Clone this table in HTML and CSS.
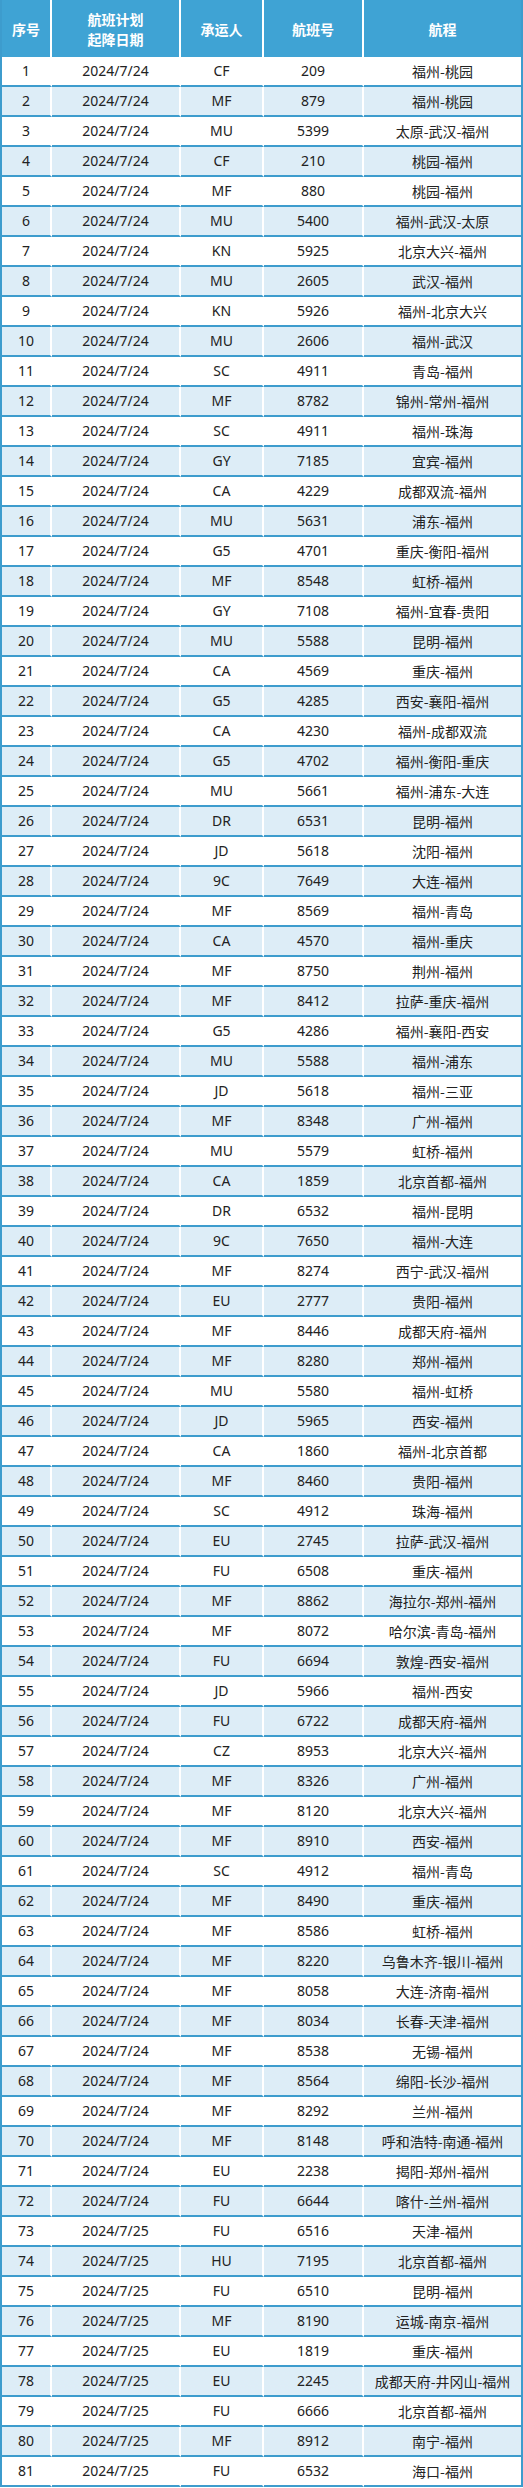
FILE: index.html
```html
<!DOCTYPE html>
<html lang="zh-CN">
<head>
<meta charset="utf-8">
<title>航班计划</title>
<link rel="stylesheet" href="styles.css">
</head>
<body>
<table class="flights">
<colgroup>
<col class="c-no"><col class="c-date"><col class="c-carrier"><col class="c-flight"><col class="c-route">
</colgroup>
<thead>
<tr><th>序号</th><th>航班计划<br>起降日期</th><th>承运人</th><th>航班号</th><th>航程</th></tr>
</thead>
<tbody>
<tr><td>1</td><td>2024/7/24</td><td>CF</td><td>209</td><td>福州-桃园</td></tr>
<tr><td>2</td><td>2024/7/24</td><td>MF</td><td>879</td><td>福州-桃园</td></tr>
<tr><td>3</td><td>2024/7/24</td><td>MU</td><td>5399</td><td>太原-武汉-福州</td></tr>
<tr><td>4</td><td>2024/7/24</td><td>CF</td><td>210</td><td>桃园-福州</td></tr>
<tr><td>5</td><td>2024/7/24</td><td>MF</td><td>880</td><td>桃园-福州</td></tr>
<tr><td>6</td><td>2024/7/24</td><td>MU</td><td>5400</td><td>福州-武汉-太原</td></tr>
<tr><td>7</td><td>2024/7/24</td><td>KN</td><td>5925</td><td>北京大兴-福州</td></tr>
<tr><td>8</td><td>2024/7/24</td><td>MU</td><td>2605</td><td>武汉-福州</td></tr>
<tr><td>9</td><td>2024/7/24</td><td>KN</td><td>5926</td><td>福州-北京大兴</td></tr>
<tr><td>10</td><td>2024/7/24</td><td>MU</td><td>2606</td><td>福州-武汉</td></tr>
<tr><td>11</td><td>2024/7/24</td><td>SC</td><td>4911</td><td>青岛-福州</td></tr>
<tr><td>12</td><td>2024/7/24</td><td>MF</td><td>8782</td><td>锦州-常州-福州</td></tr>
<tr><td>13</td><td>2024/7/24</td><td>SC</td><td>4911</td><td>福州-珠海</td></tr>
<tr><td>14</td><td>2024/7/24</td><td>GY</td><td>7185</td><td>宜宾-福州</td></tr>
<tr><td>15</td><td>2024/7/24</td><td>CA</td><td>4229</td><td>成都双流-福州</td></tr>
<tr><td>16</td><td>2024/7/24</td><td>MU</td><td>5631</td><td>浦东-福州</td></tr>
<tr><td>17</td><td>2024/7/24</td><td>G5</td><td>4701</td><td>重庆-衡阳-福州</td></tr>
<tr><td>18</td><td>2024/7/24</td><td>MF</td><td>8548</td><td>虹桥-福州</td></tr>
<tr><td>19</td><td>2024/7/24</td><td>GY</td><td>7108</td><td>福州-宜春-贵阳</td></tr>
<tr><td>20</td><td>2024/7/24</td><td>MU</td><td>5588</td><td>昆明-福州</td></tr>
<tr><td>21</td><td>2024/7/24</td><td>CA</td><td>4569</td><td>重庆-福州</td></tr>
<tr><td>22</td><td>2024/7/24</td><td>G5</td><td>4285</td><td>西安-襄阳-福州</td></tr>
<tr><td>23</td><td>2024/7/24</td><td>CA</td><td>4230</td><td>福州-成都双流</td></tr>
<tr><td>24</td><td>2024/7/24</td><td>G5</td><td>4702</td><td>福州-衡阳-重庆</td></tr>
<tr><td>25</td><td>2024/7/24</td><td>MU</td><td>5661</td><td>福州-浦东-大连</td></tr>
<tr><td>26</td><td>2024/7/24</td><td>DR</td><td>6531</td><td>昆明-福州</td></tr>
<tr><td>27</td><td>2024/7/24</td><td>JD</td><td>5618</td><td>沈阳-福州</td></tr>
<tr><td>28</td><td>2024/7/24</td><td>9C</td><td>7649</td><td>大连-福州</td></tr>
<tr><td>29</td><td>2024/7/24</td><td>MF</td><td>8569</td><td>福州-青岛</td></tr>
<tr><td>30</td><td>2024/7/24</td><td>CA</td><td>4570</td><td>福州-重庆</td></tr>
<tr><td>31</td><td>2024/7/24</td><td>MF</td><td>8750</td><td>荆州-福州</td></tr>
<tr><td>32</td><td>2024/7/24</td><td>MF</td><td>8412</td><td>拉萨-重庆-福州</td></tr>
<tr><td>33</td><td>2024/7/24</td><td>G5</td><td>4286</td><td>福州-襄阳-西安</td></tr>
<tr><td>34</td><td>2024/7/24</td><td>MU</td><td>5588</td><td>福州-浦东</td></tr>
<tr><td>35</td><td>2024/7/24</td><td>JD</td><td>5618</td><td>福州-三亚</td></tr>
<tr><td>36</td><td>2024/7/24</td><td>MF</td><td>8348</td><td>广州-福州</td></tr>
<tr><td>37</td><td>2024/7/24</td><td>MU</td><td>5579</td><td>虹桥-福州</td></tr>
<tr><td>38</td><td>2024/7/24</td><td>CA</td><td>1859</td><td>北京首都-福州</td></tr>
<tr><td>39</td><td>2024/7/24</td><td>DR</td><td>6532</td><td>福州-昆明</td></tr>
<tr><td>40</td><td>2024/7/24</td><td>9C</td><td>7650</td><td>福州-大连</td></tr>
<tr><td>41</td><td>2024/7/24</td><td>MF</td><td>8274</td><td>西宁-武汉-福州</td></tr>
<tr><td>42</td><td>2024/7/24</td><td>EU</td><td>2777</td><td>贵阳-福州</td></tr>
<tr><td>43</td><td>2024/7/24</td><td>MF</td><td>8446</td><td>成都天府-福州</td></tr>
<tr><td>44</td><td>2024/7/24</td><td>MF</td><td>8280</td><td>郑州-福州</td></tr>
<tr><td>45</td><td>2024/7/24</td><td>MU</td><td>5580</td><td>福州-虹桥</td></tr>
<tr><td>46</td><td>2024/7/24</td><td>JD</td><td>5965</td><td>西安-福州</td></tr>
<tr><td>47</td><td>2024/7/24</td><td>CA</td><td>1860</td><td>福州-北京首都</td></tr>
<tr><td>48</td><td>2024/7/24</td><td>MF</td><td>8460</td><td>贵阳-福州</td></tr>
<tr><td>49</td><td>2024/7/24</td><td>SC</td><td>4912</td><td>珠海-福州</td></tr>
<tr><td>50</td><td>2024/7/24</td><td>EU</td><td>2745</td><td>拉萨-武汉-福州</td></tr>
<tr><td>51</td><td>2024/7/24</td><td>FU</td><td>6508</td><td>重庆-福州</td></tr>
<tr><td>52</td><td>2024/7/24</td><td>MF</td><td>8862</td><td>海拉尔-郑州-福州</td></tr>
<tr><td>53</td><td>2024/7/24</td><td>MF</td><td>8072</td><td>哈尔滨-青岛-福州</td></tr>
<tr><td>54</td><td>2024/7/24</td><td>FU</td><td>6694</td><td>敦煌-西安-福州</td></tr>
<tr><td>55</td><td>2024/7/24</td><td>JD</td><td>5966</td><td>福州-西安</td></tr>
<tr><td>56</td><td>2024/7/24</td><td>FU</td><td>6722</td><td>成都天府-福州</td></tr>
<tr><td>57</td><td>2024/7/24</td><td>CZ</td><td>8953</td><td>北京大兴-福州</td></tr>
<tr><td>58</td><td>2024/7/24</td><td>MF</td><td>8326</td><td>广州-福州</td></tr>
<tr><td>59</td><td>2024/7/24</td><td>MF</td><td>8120</td><td>北京大兴-福州</td></tr>
<tr><td>60</td><td>2024/7/24</td><td>MF</td><td>8910</td><td>西安-福州</td></tr>
<tr><td>61</td><td>2024/7/24</td><td>SC</td><td>4912</td><td>福州-青岛</td></tr>
<tr><td>62</td><td>2024/7/24</td><td>MF</td><td>8490</td><td>重庆-福州</td></tr>
<tr><td>63</td><td>2024/7/24</td><td>MF</td><td>8586</td><td>虹桥-福州</td></tr>
<tr><td>64</td><td>2024/7/24</td><td>MF</td><td>8220</td><td>乌鲁木齐-银川-福州</td></tr>
<tr><td>65</td><td>2024/7/24</td><td>MF</td><td>8058</td><td>大连-济南-福州</td></tr>
<tr><td>66</td><td>2024/7/24</td><td>MF</td><td>8034</td><td>长春-天津-福州</td></tr>
<tr><td>67</td><td>2024/7/24</td><td>MF</td><td>8538</td><td>无锡-福州</td></tr>
<tr><td>68</td><td>2024/7/24</td><td>MF</td><td>8564</td><td>绵阳-长沙-福州</td></tr>
<tr><td>69</td><td>2024/7/24</td><td>MF</td><td>8292</td><td>兰州-福州</td></tr>
<tr><td>70</td><td>2024/7/24</td><td>MF</td><td>8148</td><td>呼和浩特-南通-福州</td></tr>
<tr><td>71</td><td>2024/7/24</td><td>EU</td><td>2238</td><td>揭阳-郑州-福州</td></tr>
<tr><td>72</td><td>2024/7/24</td><td>FU</td><td>6644</td><td>喀什-兰州-福州</td></tr>
<tr><td>73</td><td>2024/7/25</td><td>FU</td><td>6516</td><td>天津-福州</td></tr>
<tr><td>74</td><td>2024/7/25</td><td>HU</td><td>7195</td><td>北京首都-福州</td></tr>
<tr><td>75</td><td>2024/7/25</td><td>FU</td><td>6510</td><td>昆明-福州</td></tr>
<tr><td>76</td><td>2024/7/25</td><td>MF</td><td>8190</td><td>运城-南京-福州</td></tr>
<tr><td>77</td><td>2024/7/25</td><td>EU</td><td>1819</td><td>重庆-福州</td></tr>
<tr><td>78</td><td>2024/7/25</td><td>EU</td><td>2245</td><td>成都天府-井冈山-福州</td></tr>
<tr><td>79</td><td>2024/7/25</td><td>FU</td><td>6666</td><td>北京首都-福州</td></tr>
<tr><td>80</td><td>2024/7/25</td><td>MF</td><td>8912</td><td>南宁-福州</td></tr>
<tr><td>81</td><td>2024/7/25</td><td>FU</td><td>6532</td><td>海口-福州</td></tr>
</tbody>
</table>
</body>
</html>
```
FILE: styles.css
```css
html, body {
  margin: 0;
  padding: 0;
  background: #ffffff;
}

.flights {
  width: 523px;
  table-layout: fixed;
  border-collapse: separate;
  border-spacing: 0;
  font-family: "Noto Sans", "Noto Sans CJK SC", sans-serif;
  font-size: 14px;
  color: #222222;
}

.c-no { width: 52px; }
.c-date { width: 129px; }
.c-carrier { width: 83px; }
.c-flight { width: 100px; }
.c-route { width: 159px; }

.flights th,
.flights td {
  padding: 0;
  text-align: center;
  vertical-align: middle;
  box-sizing: border-box;
  border-right: 2px solid #ffffff;
}

.flights th:first-child,
.flights td:first-child {
  border-left: 2px solid #3d9ccd;
}

.flights th:last-child,
.flights td:last-child {
  border-right: 2px solid #3d9ccd;
}

.flights th {
  height: 57px;
  background: #3fa3d4;
  color: #ffffff;
  font-family: "Noto Sans CJK SC", sans-serif;
  font-weight: 700;
  font-size: 14px;
  line-height: 20px;
}

.flights td {
  height: 30px;
  line-height: 20px;
  border-bottom: 2px solid #3d9ccd;
  white-space: nowrap;
}

.flights tbody tr:nth-child(even) td {
  background: #ddedf7;
}

.flights td:last-child {
  font-family: "Noto Sans CJK SC", sans-serif;
}
```
